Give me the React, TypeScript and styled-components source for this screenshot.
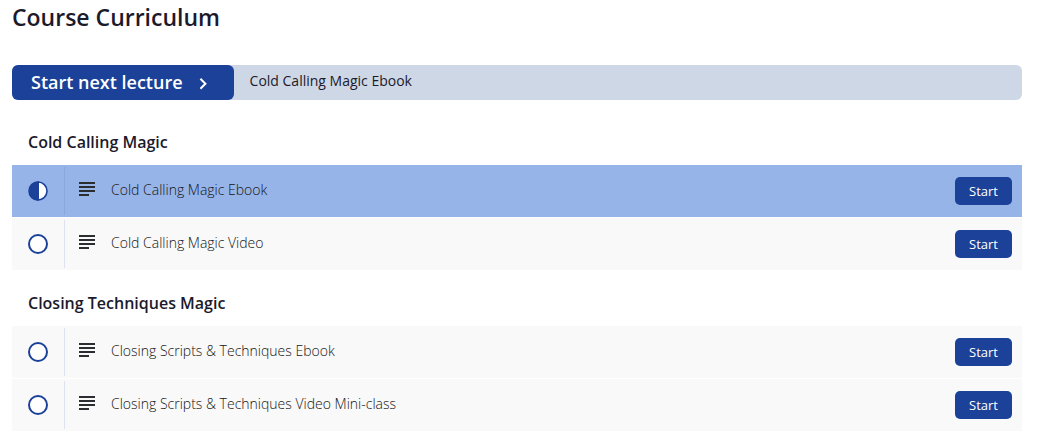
import React from "react";
import styled, { createGlobalStyle } from "styled-components";

const GlobalStyle = createGlobalStyle`
  *, *::before, *::after { box-sizing: border-box; }
  body {
    margin: 0;
    background: #fff;
    color: #1b1a2c;
    font-family: "Open Sans", "Noto Sans", sans-serif;
  }
`;

const Page = styled.main`
  padding: 0 20px 4px 12px;
`;

const Title = styled.h1`
  margin: 0;
  padding-top: 2px;
  font-size: 23px;
  line-height: 31px;
  font-weight: 600;
`;

const NextLecture = styled.div`
  display: flex;
  height: 35px;
  margin: 32px 0 9px;
  border-radius: 6px;
  background: #ced7e5;
`;

const NextButton = styled.button`
  display: flex;
  align-items: center;
  gap: 16px;
  padding: 0 26px 0 19px;
  border: 0;
  border-radius: 6px;
  background: #1b4298;
  color: #fff;
  font: 600 18px/35px "Open Sans", "Noto Sans", sans-serif;
  cursor: pointer;
`;

const NextName = styled.span`
  padding-left: 16px;
  font-size: 14px;
  line-height: 32px;
  font-weight: 400;
`;

const SectionTitle = styled.h2`
  margin: 0;
  padding: 22px 16px 12px;
  font-size: 16px;
  line-height: 22px;
  font-weight: 600;
`;

const Lectures = styled.ul`
  display: flex;
  flex-direction: column;
  gap: 1px;
  margin: 0;
  padding: 0;
  list-style: none;
`;

const Row = styled.li<{ $current: boolean }>`
  display: flex;
  align-items: center;
  height: 52px;
  padding: 2px 10px 2px 0;
  background: ${(p) => (p.$current ? "#97b4e9" : "#f9f9f9")};
`;

const Status = styled.span<{ $current: boolean }>`
  display: flex;
  align-items: center;
  align-self: stretch;
  width: 53px;
  padding-left: 16px;
  border-right: 1px solid ${(p) => (p.$current ? "#8aa8de" : "#dde2ec")};
`;

const LectureLink = styled.a`
  display: flex;
  flex: 1;
  align-items: center;
  gap: 16px;
  padding: 0 14px 3px;
  color: #141414;
  font-size: 14px;
  line-height: 20px;
  font-weight: 300;
  text-decoration: none;
`;

const StartButton = styled.button`
  height: 28px;
  padding: 0 14px;
  border: 0;
  border-radius: 5px;
  background: #1b4298;
  color: #fff;
  font: 400 13px/28px "Open Sans", "Noto Sans", sans-serif;
  cursor: pointer;
`;

const Chevron = () => (
  <svg width="9" height="14" viewBox="0 0 9 14" fill="none" stroke="#fff" strokeWidth="2" aria-hidden="true">
    <path d="M1.4 2.8l5 5-5 5" />
  </svg>
);

const StatusIcon = ({ half }: { half: boolean }) => (
  <svg width="20" height="20" viewBox="0 0 20 20" role="img" aria-label={half ? "In progress" : "Not started"}>
    <circle cx="10" cy="10" r="9" fill="#fff" stroke="#1b4298" strokeWidth={half ? 1.6 : 2} />
    {half && <path d="M11 0.2A9.8 9.8 0 0 0 11 19.8z" fill="#1b4298" />}
  </svg>
);

const TextIcon = () => (
  <svg width="16" height="15" viewBox="0 0 16 15" fill="#2c2d30" aria-hidden="true">
    <path d="M0 0h16v2H0zM0 4h16v2H0zM0 8h16v2H0zM0 12h10v2H0z" />
  </svg>
);

const sections = [
  { title: "Cold Calling Magic", lectures: ["Cold Calling Magic Ebook", "Cold Calling Magic Video"] },
  {
    title: "Closing Techniques Magic",
    lectures: ["Closing Scripts & Techniques Ebook", "Closing Scripts & Techniques Video Mini-class"],
  },
];

const currentLecture = "Cold Calling Magic Ebook";

export default function App() {
  return (
    <>
      <GlobalStyle />
      <Page>
        <Title>Course Curriculum</Title>
        <NextLecture>
          <NextButton type="button">
            Start next lecture
            <Chevron />
          </NextButton>
          <NextName>{currentLecture}</NextName>
        </NextLecture>
        {sections.map((section) => (
          <section key={section.title}>
            <SectionTitle>{section.title}</SectionTitle>
            <Lectures>
              {section.lectures.map((name) => {
                const current = name === currentLecture;
                return (
                  <Row key={name} $current={current}>
                    <Status $current={current}>
                      <StatusIcon half={current} />
                    </Status>
                    <LectureLink href="#">
                      <TextIcon />
                      {name}
                    </LectureLink>
                    <StartButton type="button">Start</StartButton>
                  </Row>
                );
              })}
            </Lectures>
          </section>
        ))}
      </Page>
    </>
  );
}
